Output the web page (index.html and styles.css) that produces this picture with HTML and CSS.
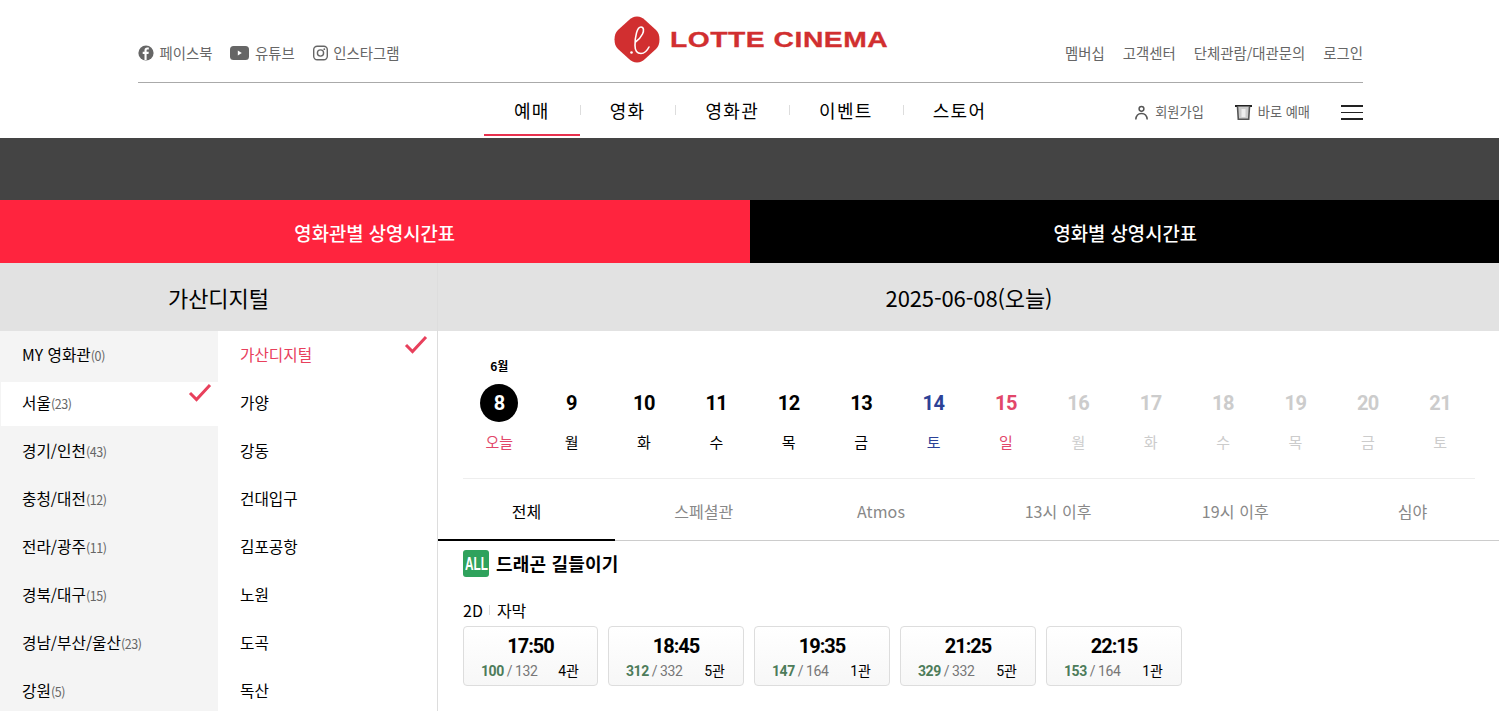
FILE: index.html
```html
<!DOCTYPE html>
<html lang="ko">
<head>
  <meta charset="utf-8">
  <title>상영시간표 | 롯데시네마</title>
  <link rel="stylesheet" href="styles.css">
</head>
<body>
  <header class="header">
    <div class="top-row">
      <ul class="social">
        <li>
          <svg class="ico" width="16" height="16" viewBox="0 0 16 16"><circle cx="8" cy="8" r="7.6" fill="#666"/><path d="M8.6 15V9h1.9l.3-2.2H8.6V5.5c0-.6.2-1 1-1h1.2V2.6c-.3 0-.9-.1-1.6-.1-1.6 0-2.7 1-2.7 2.800v1.500H4.700V9h1.800v6z" fill="#fff"/></svg>
          페이스북
        </li>
        <li>
          <svg class="ico" width="19" height="14" viewBox="0 0 19 14"><rect width="19" height="14" rx="3.500" fill="#666"/><path d="M7.800 4.500v5l4-2.500z" fill="#fff"/></svg>
          유튜브
        </li>
        <li>
          <svg class="ico" width="15" height="16" viewBox="0 0 15 16"><rect x=".7" y="1.200" width="13.600" height="13.600" rx="3.500" fill="none" stroke="#666" stroke-width="1.400"/><circle cx="7.500" cy="8" r="3.100" fill="none" stroke="#666" stroke-width="1.400"/><circle cx="11.300" cy="4.200" r=".9" fill="#666"/></svg>
          인스타그램
        </li>
      </ul>
      <a class="logo">
        <svg width="46" height="47" viewBox="0 0 46 47"><path d="M23 .5c3.500 0 5.500 1.300 8 3.500l11 10c2.600 2.500 3.500 5.500 3.500 9.500s-.9 7-3.500 9.500L31 43c-2.500 2.200-4.500 3.500-8 3.500s-5.500-1.300-8-3.500L4 33C1.400 30.500.5 27.500.5 23.500S1.400 16.500 4 14L15 4c2.500-2.200 4.500-3.500 8-3.500z" fill="#d12f30"/><path d="M35 31c-2 4-5 6.500-8 6.500-4 0-6-3-6-8 0-9 2-18.500 6-18.500 3 0 3 4 1.500 7-1.500 3-4 6-7 8" fill="none" stroke="#fff" stroke-width="1.600" stroke-linecap="round"/><circle cx="17.500" cy="36.500" r="1.300" fill="#fff"/></svg>
        <span class="logo-text">LOTTE CINEMA</span>
      </a>
      <ul class="util">
        <li>멤버십</li>
        <li>고객센터</li>
        <li>단체관람/대관문의</li>
        <li>로그인</li>
      </ul>
    </div>
    <div class="nav-row">
      <ul class="gnb">
        <li class="on">예매</li>
        <li>영화</li>
        <li>영화관</li>
        <li>이벤트</li>
        <li>스토어</li>
      </ul>
      <div class="quick">
        <span class="quick-item">
          <svg width="15" height="15" viewBox="0 0 15 15"><circle cx="7.500" cy="3.800" r="2.400" fill="none" stroke="#555" stroke-width="1.500"/><path d="M1.800 14.500c.3-3.800 2.500-6 5.700-6s5.400 2.200 5.700 6" fill="none" stroke="#555" stroke-width="1.500"/></svg>
          회원가입
        </span>
        <span class="quick-item">
          <svg width="17" height="15" viewBox="0 0 17 15"><path d="M0 1h17" stroke="#222" stroke-width="2"/><path d="M2.500 1.500l.8 12.700h10.400l.8-12.700" fill="#ccc" stroke="#555" stroke-width="1.600"/><rect x="6.500" y="4" width="4" height="8" fill="#eee"/></svg>
          바로 예매
        </span>
        <span class="burger"><i></i><i></i><i></i></span>
      </div>
    </div>
  </header>

  <div class="band"></div>

  <div class="tabs">
    <div class="tab tab-red">영화관별 상영시간표</div>
    <div class="tab tab-black">영화별 상영시간표</div>
  </div>

  <div class="main">
    <aside class="side">
      <h2 class="side-title">가산디지털</h2>
      <div class="side-lists">
        <ul class="areas">
          <li>MY 영화관<small>(0)</small></li>
          <li class="on">서울<small>(23)</small><svg class="check" width="24" height="19" viewBox="0 0 24 19"><path d="M2 10l6.500 6.500L22 2" fill="none" stroke="#e8405c" stroke-width="3"/></svg></li>
          <li>경기/인천<small>(43)</small></li>
          <li>충청/대전<small>(12)</small></li>
          <li>전라/광주<small>(11)</small></li>
          <li>경북/대구<small>(15)</small></li>
          <li>경남/부산/울산<small>(23)</small></li>
          <li>강원<small>(5)</small></li>
        </ul>
        <ul class="cinemas">
          <li class="on">가산디지털<svg class="check" width="24" height="19" viewBox="0 0 24 19"><path d="M2 10l6.500 6.500L22 2" fill="none" stroke="#e8405c" stroke-width="3"/></svg></li>
          <li>가양</li>
          <li>강동</li>
          <li>건대입구</li>
          <li>김포공항</li>
          <li>노원</li>
          <li>도곡</li>
          <li>독산</li>
        </ul>
      </div>
    </aside>

    <section class="content">
      <h2 class="date-title">2025-06-08(오늘)</h2>
      <div class="dates">
        <div class="date"><em>6월</em><b class="today">8</b><span class="red">오늘</span></div>
        <div class="date"><b>9</b><span>월</span></div>
        <div class="date"><b>10</b><span>화</span></div>
        <div class="date"><b>11</b><span>수</span></div>
        <div class="date"><b>12</b><span>목</span></div>
        <div class="date"><b>13</b><span>금</span></div>
        <div class="date sat"><b>14</b><span>토</span></div>
        <div class="date sun"><b>15</b><span>일</span></div>
        <div class="date off"><b>16</b><span>월</span></div>
        <div class="date off"><b>17</b><span>화</span></div>
        <div class="date off"><b>18</b><span>수</span></div>
        <div class="date off"><b>19</b><span>목</span></div>
        <div class="date off"><b>20</b><span>금</span></div>
        <div class="date off"><b>21</b><span>토</span></div>
      </div>
      <ul class="filters">
        <li class="on">전체</li>
        <li>스페셜관</li>
        <li>Atmos</li>
        <li>13시 이후</li>
        <li>19시 이후</li>
        <li>심야</li>
      </ul>
      <div class="movie">
        <div class="movie-title"><span class="grade"><span class="grade-text">ALL</span></span>드래곤 길들이기</div>
        <div class="format">2D<i></i>자막</div>
        <div class="times">
          <div class="time"><strong>17:50</strong><p><span><b>100</b> / 132</span><span class="hall">4관</span></p></div>
          <div class="time"><strong>18:45</strong><p><span><b>312</b> / 332</span><span class="hall">5관</span></p></div>
          <div class="time"><strong>19:35</strong><p><span><b>147</b> / 164</span><span class="hall">1관</span></p></div>
          <div class="time"><strong>21:25</strong><p><span><b>329</b> / 332</span><span class="hall">5관</span></p></div>
          <div class="time"><strong>22:15</strong><p><span><b>153</b> / 164</span><span class="hall">1관</span></p></div>
        </div>
      </div>
    </section>
  </div>
</body>
</html>
```
FILE: styles.css
```css
* {
  box-sizing: border-box;
}

html, body {
  height: 711px;
  margin: 0;
  overflow: hidden;
}

body {
  font-family: "Noto Sans CJK KR", "Noto Sans", sans-serif;
  color: #000;
  background: #fff;
}

ul {
  list-style: none;
  margin: 0;
  padding: 0;
}

h2, p {
  margin: 0;
  font-weight: 400;
}

/* header */
.header {
  height: 138px;
  padding: 0 136px 0 138px;
}

.top-row {
  height: 83px;
  display: flex;
  justify-content: space-between;
  align-items: flex-start;
  border-bottom: 1px solid #aaa;
  position: relative;
}

.social {
  display: flex;
  gap: 18px;
  padding-top: 42px;
  font-size: 14.4px;
  line-height: 21px;
  color: #666;
}

.social li {
  display: flex;
  align-items: center;
  gap: 5.5px;
}

.logo {
  position: absolute;
  left: 476px;
  top: 16px;
  display: flex;
  align-items: center;
  gap: 10px;
}

.logo-text {
  font-family: "Liberation Sans", sans-serif;
  font-weight: 700;
  font-size: 22px;
  line-height: 47px;
  letter-spacing: .4px;
  color: #d12f30;
  display: inline-block;
  width: 216px;
  white-space: nowrap;
  transform: scaleX(1.285);
  transform-origin: left center;
  -webkit-text-stroke: .3px #d12f30;
}

.util {
  display: flex;
  gap: 18px;
  padding-top: 42px;
  font-size: 14.4px;
  line-height: 21px;
  color: #666;
}

.nav-row {
  height: 55px;
  position: relative;
  display: flex;
  justify-content: flex-end;
}

.gnb {
  position: absolute;
  left: 346px;
  top: 0;
  display: flex;
  font-size: 18px;
  letter-spacing: 1.3px;
}

.gnb li {
  height: 53px;
  line-height: 55px;
  padding: 0 30px;
  position: relative;
  color: #000;
}

.gnb li + li::before {
  content: "";
  position: absolute;
  left: 0;
  top: 22px;
  width: 1px;
  height: 10px;
  background: #ddd;
}

.gnb .on {
  border-bottom: 2px solid #e8304d;
}

.quick {
  display: flex;
  align-items: center;
  height: 57px;
  font-size: 13.2px;
  color: #666;
}

.quick-item {
  display: flex;
  align-items: center;
  gap: 6px;
  margin-right: 31px;
}

.quick-item svg {
  margin-top: 2px;
}

.burger {
  display: flex;
  flex-direction: column;
  gap: 5px;
  width: 22px;
  margin-top: 2px;
}

.burger i {
  display: block;
  height: 1.5px;
  background: #222;
}

/* dark band and tabs */
.band {
  height: 62px;
  background: #444;
}

.tabs {
  display: flex;
  height: 63px;
}

.tab {
  flex: 1;
  text-align: center;
  line-height: 65px;
  font-size: 18.8px;
  font-weight: 500;
  color: #fff;
}

.tab-red {
  background: #ff243e;
}

.tab-black {
  background: #000;
  text-indent: 2px;
}

/* main */
.main {
  display: flex;
}

.side {
  width: 438px;
  border-right: 1px solid #ddd;
  flex: none;
}

.side-title,
.date-title {
  height: 68px;
  line-height: 68px;
  text-align: center;
  font-size: 22px;
  background: #e2e2e2;
}

.side-lists {
  display: flex;
}

.areas {
  width: 218px;
  background: #f4f4f4;
  height: 380px;
  flex: none;
}

.areas li,
.cinemas li {
  height: 48px;
  line-height: 47px;
  font-size: 15.7px;
  padding-left: 22px;
  position: relative;
}

.areas small {
  font-size: 12.5px;
  color: #666;
  letter-spacing: -.4px;
}

.areas .on {
  background: #fff;
  height: 44px;
  margin: 3px 0 1px 1px;
  line-height: 42px;
  padding-left: 21px;
}

.cinemas {
  flex: 1;
}

.cinemas .on {
  color: #e8405c;
}

.check {
  position: absolute;
  right: 6px;
  top: 1px;
}

.cinemas .check {
  right: 9px;
  top: 4px;
}

/* right column */
.content {
  flex: 1;
  min-width: 0;
  overflow: hidden;
}

.date-title {
  border-left: 1px solid #e2e2e2;
  letter-spacing: -.1px;
}

.dates {
  display: grid;
  grid-template-columns: repeat(14, 72.4px);
  margin: 0 24px 0 25px;
  height: 148px;
  border-bottom: 1px solid #eee;
  padding-top: 53px;
  text-align: center;
}

.date {
  position: relative;
  display: flex;
  flex-direction: column;
  align-items: center;
}

.date em {
  position: absolute;
  top: -27px;
  font-style: normal;
  font-size: 12px;
  font-weight: 700;
  line-height: 18px;
}

.date b {
  width: 38px;
  height: 38px;
  line-height: 38px;
  font-family: Roboto, sans-serif;
  font-size: 20px;
  font-weight: 700;
  letter-spacing: -.5px;
}

.date b.today {
  background: #000;
  color: #fff;
  border-radius: 50%;
}

.date span {
  margin-top: 10px;
  font-size: 15px;
  line-height: 20px;
}

.date .red,
.sun b,
.sun span {
  color: #e2476a;
}

.sat b,
.sat span {
  color: #2c4297;
}

.off b,
.off span {
  color: #ccc;
}

.filters {
  display: flex;
  height: 62px;
  border-bottom: 1px solid #ccc;
}

.filters li {
  flex: none;
  width: 177.2px;
  text-align: center;
  line-height: 65px;
  font-size: 16px;
  letter-spacing: .1px;
  color: #888;
  margin-bottom: -1px;
}

.filters .on {
  color: #000;
  border-bottom: 2px solid #000;
}

.movie {
  padding: 9px 0 0 25px;
}

.movie-title {
  display: flex;
  align-items: center;
  gap: 7px;
  font-size: 18px;
  font-weight: 700;
  letter-spacing: .2px;
  line-height: 27px;
}

.grade {
  width: 26px;
  height: 27px;
  border-radius: 3px;
  background: #2fa25c;
  color: #fff;
  display: flex;
  justify-content: center;
}

.grade-text {
  flex: none;
  font-family: "Liberation Sans", sans-serif;
  font-size: 19px;
  letter-spacing: 0;
  transform: scaleX(.62);
}

.format {
  margin-top: 22px;
  font-size: 16px;
  line-height: 22px;
  display: flex;
  align-items: center;
}

.format i {
  width: 1px;
  height: 10px;
  margin: 0 6.5px;
  background: #ddd;
}

.times {
  display: flex;
  gap: 10px;
  margin-top: 5px;
}

.time {
  width: 136px;
  height: 60px;
  border: 1px solid #ddd;
  border-radius: 4px;
  background: linear-gradient(#fff, #f7f7f7);
  text-align: center;
  padding-top: 7px;
}

.time:first-child {
  width: 135px;
}

.time strong {
  display: block;
  font-family: Roboto, sans-serif;
  font-size: 20px;
  line-height: 24px;
  font-weight: 700;
  letter-spacing: -1px;
}

.time p {
  display: flex;
  justify-content: space-between;
  padding: 4px 18px 0 17px;
  font-family: Roboto, "Noto Sans CJK KR", sans-serif;
  font-size: 14px;
  letter-spacing: -.45px;
  line-height: 18px;
  color: #777;
}

.time p b {
  color: #4d7c5a;
}

.time .hall {
  color: #000;
  letter-spacing: 0;
}
```
